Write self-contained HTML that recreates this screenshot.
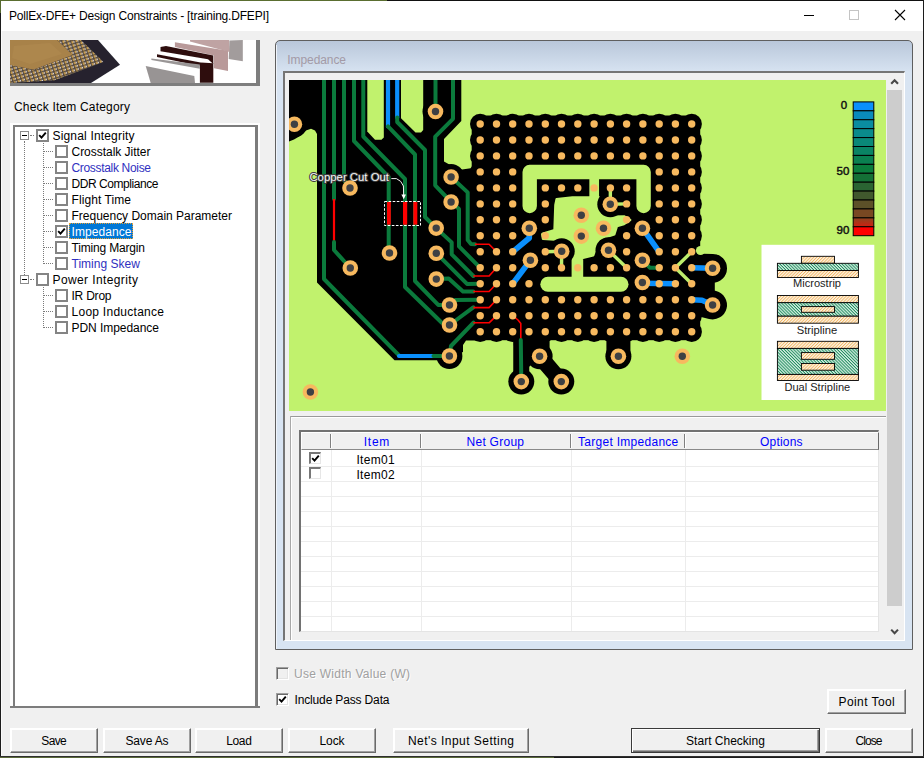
<!DOCTYPE html><html><head><meta charset="utf-8"><title>PollEx-DFE+ Design Constraints</title><style>
html,body{margin:0;padding:0}
body{width:924px;height:758px;position:relative;overflow:hidden;background:#f0f0f0;font-family:"Liberation Sans",sans-serif;font-size:12px;color:#000}
.a{position:absolute}
.t{position:absolute;white-space:nowrap;line-height:14px;height:14px}
.cb{position:absolute;width:9px;height:9px;border:2px solid #848484;background:#fff}
.ex{position:absolute;width:7px;height:7px;border:1px solid #8c8c8c;background:#fff}
.ex i{position:absolute;left:1px;top:3px;width:5px;height:1px;background:#000}
.dv{position:absolute;width:0;border-left:1px dotted #7a7a7a}
.dh{position:absolute;height:0;border-top:1px dotted #7a7a7a}
.btn{position:absolute;height:24.4px;box-sizing:border-box;background:#f0f0f0;border-top:1px solid #fff;border-left:1px solid #fff;border-right:1px solid #6a6a6a;border-bottom:1px solid #6a6a6a;box-shadow:inset -1px -1px 0 #a0a0a0, inset 1px 1px 0 #fff;text-align:center;line-height:24.6px;white-space:nowrap}
.cb3{position:absolute;width:11px;height:11px;background:#fff;border:1px solid;border-color:#a0a0a0 #fff #fff #a0a0a0;box-shadow:inset 1px 1px 0 #696969, inset -1px -1px 0 #e3e3e3}
.cb4{position:absolute;width:9px;height:9px;background:#fff;border:solid;border-width:2px 1px 1px 2px;border-color:#777 #e6e6e6 #e6e6e6 #777}
.hd{position:absolute;top:435px;height:14px;line-height:14px;color:#0000ff;text-align:center;white-space:nowrap}
.sep{position:absolute;top:434px;width:1px;height:14px;background:#808080;box-shadow:1px 0 0 #fff}
.gl{position:absolute;background:#ececec}
</style></head><body>
<div class="a" style="left:0;top:0;width:924px;height:1px;background:linear-gradient(90deg,#5a6e30 0,#5a6e30 387px,#111 387px)"></div>
<div class="a" style="left:0;top:0;width:1px;height:13px;background:#55692f"></div>
<div class="a" style="left:0;top:13px;width:1px;height:745px;background:#1c1c1c"></div>
<div class="a" style="left:923px;top:0;width:1px;height:758px;background:#1c1c1c"></div>
<div class="a" style="left:0;top:756px;width:924px;height:1px;background:#2e2e2e"></div>
<div class="a" style="left:0;top:757px;width:924px;height:1px;background:linear-gradient(90deg,#5b6b3a 0,#5b6b3a 60%,#1c1c1c 60%)"></div>
<div class="a" style="left:1px;top:1px;width:922px;height:30px;background:#fff"></div>
<div class="t" style="left:9px;top:9px;letter-spacing:-0.19px;">PollEx-DFE+ Design Constraints - [training.DFEPI]</div>
<div class="a" style="left:804px;top:15px;width:10px;height:1px;background:#000"></div>
<div class="a" style="left:849px;top:10px;width:8px;height:8px;border:1px solid #c4c4c4"></div>
<svg class="a" style="left:894px;top:9px" width="12" height="12" viewBox="0 0 12 12"><path d="M1 1 L11 11 M11 1 L1 11" stroke="#000" stroke-width="1.1" fill="none"/></svg>
<div class="a" style="left:1px;top:31px;width:1px;height:725px;background:#fbfbfb"></div>
<div class="a" style="left:10px;top:40px;width:249.5px;height:45.5px;background:#7e7e7e"></div>
<svg class="a" style="left:10px;top:40px" width="246" height="43" viewBox="10 40 246 43">
<defs><pattern id="pins" width="4.2" height="3.4" patternUnits="userSpaceOnUse" patternTransform="rotate(-18)"><rect width="4.2" height="3.4" fill="#54493f"/><rect x="0.4" y="0.2" width="1.7" height="2.4" fill="#d9a94e"/><rect x="2.2" y="0.6" width="1.1" height="1.6" fill="#e9e4ec"/></pattern>
<filter id="bl"><feGaussianBlur stdDeviation="0.6"/></filter></defs>
<rect x="10" y="40" width="246" height="43" fill="#fff"/>
<g filter="url(#bl)">
<polygon points="10,40 98,40 120,64.7 91,83 10,83" fill="#25242f"/>
<polygon points="57,40 81,40 103.5,62 54.5,80.2 10,83 10,64 33,70 72.7,55" fill="url(#pins)"/>
<polygon points="10,40 57.2,40 72.7,54.9 33.3,69.7 10,64.7" fill="#a8824a"/>
<polygon points="14,46 50,43 62,54 30,64 12,58" fill="#b08a50" opacity="0.6"/>
</g>
<g filter="url(#bl)">
<polygon points="229.4,40.6 242.8,40 242.8,61.2 228.7,59.1" fill="#a29c9c"/>
<polygon points="190,40 229,40 229.5,52 190,41.5" fill="#bfa3a3"/>
<polygon points="174.9,42.2 228,50.7 228,71 214,68.2 214,55.6 174.9,47.1" fill="#b99a9a"/>
<polygon points="160.5,47 166,46 213.3,55.6 213.3,64 208,59.2 160.5,51.3" fill="#2e1010"/>
<polygon points="157,54.2 200.6,62.6 213.3,63.3 213.3,82.7 199.9,82.7 199.9,66 157,57" fill="#2e1010"/>
<polygon points="151.4,58.4 199.9,64.4 199.9,68.8 151.4,60" fill="#9a9696"/>
<polygon points="145.7,66.1 194.3,76 195,83 150.7,83" fill="#989494"/>
</g>
</svg>
<div class="t" style="left:14px;top:100px;letter-spacing:0.182px;">Check Item Category</div>
<div class="a" style="left:10.3px;top:122.6px;width:249.7px;height:585.6px;background:#fdfdfd"></div>
<div class="a" style="left:12.5px;top:124.8px;width:245.3px;height:583.4px;background:#7c7c7c"></div>
<div class="a" style="left:10.3px;top:706px;width:249.7px;height:2.3px;background:#7c7c7c"></div>
<div class="a" style="left:14.9px;top:126.8px;width:240.5px;height:579.2px;background:#fff"></div>
<div class="dv" style="left:24px;top:141px;height:138px"></div>
<div class="dv" style="left:43px;top:143px;height:121px"></div>
<div class="dv" style="left:43px;top:287px;height:41px"></div>
<div class="ex" style="left:20px;top:131px"><i></i></div>
<div class="dh" style="left:30px;top:135px;width:4px"></div>
<div class="cb" style="left:36px;top:129px"></div>
<svg class="a" style="left:38px;top:131px" width="9" height="9" viewBox="0 0 9 9"><path d="M1.2 4.2 L3.5 6.6 L7.8 1.6" fill="none" stroke="#000" stroke-width="1.9"/></svg>
<div class="t" style="left:52.5px;top:128.5px;letter-spacing:0.174px;">Signal Integrity</div>
<div class="dh" style="left:44px;top:151px;width:9px"></div>
<div class="cb" style="left:55px;top:145px"></div>
<div class="t" style="left:71.5px;top:144.5px;letter-spacing:-0.024px;">Crosstalk Jitter</div>
<div class="dh" style="left:44px;top:167px;width:9px"></div>
<div class="cb" style="left:55px;top:161px"></div>
<div class="t" style="left:71.5px;top:160.5px;color:#3030c0;letter-spacing:-0.324px;">Crosstalk Noise</div>
<div class="dh" style="left:44px;top:183px;width:9px"></div>
<div class="cb" style="left:55px;top:177px"></div>
<div class="t" style="left:71.5px;top:176.5px;letter-spacing:-0.439px;">DDR Compliance</div>
<div class="dh" style="left:44px;top:199px;width:9px"></div>
<div class="cb" style="left:55px;top:193px"></div>
<div class="t" style="left:71.5px;top:192.5px;letter-spacing:0.081px;">Flight Time</div>
<div class="dh" style="left:44px;top:215px;width:9px"></div>
<div class="cb" style="left:55px;top:209px"></div>
<div class="t" style="left:71.5px;top:208.5px;letter-spacing:-0.009px;">Frequency Domain Parameter</div>
<div class="dh" style="left:44px;top:231px;width:9px"></div>
<div class="cb" style="left:55px;top:225px"></div>
<svg class="a" style="left:57px;top:227px" width="9" height="9" viewBox="0 0 9 9"><path d="M1.2 4.2 L3.5 6.6 L7.8 1.6" fill="none" stroke="#000" stroke-width="1.9"/></svg>
<div class="a" style="left:69px;top:223px;width:64px;height:16px;background:#0078d7;box-sizing:border-box;border:1px dotted #e8a030"></div>
<div class="t" style="left:71.5px;top:224.5px;color:#fff;letter-spacing:0.078px;">Impedance</div>
<div class="dh" style="left:44px;top:247px;width:9px"></div>
<div class="cb" style="left:55px;top:241px"></div>
<div class="t" style="left:71.5px;top:240.5px;letter-spacing:-0.173px;">Timing Margin</div>
<div class="dh" style="left:44px;top:263px;width:9px"></div>
<div class="cb" style="left:55px;top:257px"></div>
<div class="t" style="left:71.5px;top:256.5px;color:#3030c0;letter-spacing:0.025px;">Timing Skew</div>
<div class="ex" style="left:20px;top:275px"><i></i></div>
<div class="dh" style="left:30px;top:279px;width:4px"></div>
<div class="cb" style="left:36px;top:273px"></div>
<div class="t" style="left:52.5px;top:272.5px;letter-spacing:0.390px;">Power Integrity</div>
<div class="dh" style="left:44px;top:295px;width:9px"></div>
<div class="cb" style="left:55px;top:289px"></div>
<div class="t" style="left:71.5px;top:288.5px;letter-spacing:-0.224px;">IR Drop</div>
<div class="dh" style="left:44px;top:311px;width:9px"></div>
<div class="cb" style="left:55px;top:305px"></div>
<div class="t" style="left:71.5px;top:304.5px;letter-spacing:0.268px;">Loop Inductance</div>
<div class="dh" style="left:44px;top:327px;width:9px"></div>
<div class="cb" style="left:55px;top:321px"></div>
<div class="t" style="left:71.5px;top:320.5px;letter-spacing:-0.046px;">PDN Impedance</div>
<div class="btn" style="left:10px;top:728.3px;width:88px;"><span style="letter-spacing:-0.620px;margin-right:0.620px">Save</span></div>
<div class="btn" style="left:103px;top:728.3px;width:88px;"><span style="letter-spacing:-0.139px;margin-right:0.139px">Save As</span></div>
<div class="btn" style="left:195px;top:728.3px;width:88px;"><span style="letter-spacing:-0.334px;margin-right:0.334px">Load</span></div>
<div class="btn" style="left:288px;top:728.3px;width:88px;"><span style="letter-spacing:-0.053px;margin-right:0.053px">Lock</span></div>
<div class="btn" style="left:393px;top:728.3px;width:136px;"><span style="letter-spacing:0.462px;margin-right:-0.462px">Net's Input Setting</span></div>
<div class="btn" style="left:631px;top:728.3px;width:189px;border:1px solid #3a3a3a;box-shadow:inset 1px 1px 0 #fff, inset -1px -1px 0 #6a6a6a, inset -2px -2px 0 #a0a0a0;"><span style="letter-spacing:0.007px;margin-right:-0.007px">Start Checking</span></div>
<div class="btn" style="left:825px;top:728.3px;width:88px;"><span style="letter-spacing:-0.922px;margin-right:0.922px">Close</span></div>
<div class="btn" style="left:827px;top:689.3px;width:79.3px;"><span style="letter-spacing:0.424px;margin-right:-0.424px">Point Tool</span></div>
<div class="cb3" style="left:276px;top:667px;background:#f0f0f0"></div>
<div class="t" style="left:294px;top:666.5px;color:#a0a0a0;letter-spacing:0.270px;text-shadow:1px 1px 0 #fff;">Use Width Value (W)</div>
<div class="cb3" style="left:276px;top:693px"></div>
<svg class="a" style="left:278px;top:695px" width="9" height="9" viewBox="0 0 9 9"><path d="M1.2 4.2 L3.5 6.6 L7.8 1.6" fill="none" stroke="#000" stroke-width="1.9"/></svg>
<div class="t" style="left:294.5px;top:692.5px;letter-spacing:-0.149px;">Include Pass Data</div>
<div class="a" style="left:275px;top:40px;width:638px;height:610px;box-sizing:border-box;border:1px solid #5f5f5f;border-radius:5px 5px 0 0;background:linear-gradient(#b9c7da 0px,#d8e4f2 32px,#d8e4f2 100%)"></div>
<div class="a" style="left:276px;top:45px;width:1px;height:604px;background:#eef3fa"></div>
<div class="t" style="left:287.3px;top:52.8px;color:#a39aa6;letter-spacing:-0.084px;">Impedance</div>
<div class="a" style="left:283px;top:71px;width:622px;height:570px;background:#f0f0f0;box-sizing:border-box;border-top:2px solid #757575;border-left:2px solid #757575;border-right:1px solid #fff;border-bottom:1px solid #fff"></div>
<div class="a" style="left:887px;top:73px;width:16px;height:567px;background:#f0f0f0"></div>
<div class="a" style="left:887px;top:90px;width:15px;height:516px;background:#cdcdcd"></div>
<svg class="a" style="left:890px;top:78.3px" width="10" height="8" viewBox="0 0 10 8"><path d="M1.2 5.8 L4.6 2.2 L8 5.8" fill="none" stroke="#484848" stroke-width="2.1"/></svg>
<svg class="a" style="left:890px;top:628.3px" width="10" height="8" viewBox="0 0 10 8"><path d="M1.2 1.6 L4.6 5.2 L8 1.6" fill="none" stroke="#484848" stroke-width="2.1"/></svg>
<svg style="position:absolute;left:289px;top:80px" width="597" height="331" viewBox="289 80 597 331">
<rect x="289" y="80" width="597" height="331" fill="#c1f26d"/>
<polygon points="289.0,80.0 461.3,80.0 461.3,121.0 444.0,139.0 444.0,161.5 452.0,166.0 462.0,169.5 476.0,167.5 476.0,340.5 466.0,340.5 463.0,345.0 463.0,352.0 445.0,360.3 394.5,360.3 317.0,282.5 317.0,134.0 315.0,130.5 311.0,128.8 306.0,130.5 300.0,136.0 294.0,139.5 289.0,141.5" fill="#000"/>
<polygon points="367.3,80.0 383.8,80.0 383.8,137.5 381.5,139.8 375.0,139.8 367.3,131.5" fill="#c1f26d"/>
<polygon points="401.0,80.0 423.2,80.0 423.2,130.0 421.0,132.6 415.5,132.6 401.0,118.3" fill="#c1f26d"/>
<circle cx="675.4" cy="187.9" r="10.2" fill="#000"/>
<line x1="675.4" y1="187.9" x2="691.7" y2="187.9" stroke="#000" stroke-width="17"/>
<line x1="675.4" y1="187.9" x2="675.4" y2="203.9" stroke="#000" stroke-width="17"/>
<circle cx="545.3" cy="124.0" r="10.2" fill="#000"/>
<line x1="545.3" y1="124.0" x2="561.5" y2="124.0" stroke="#000" stroke-width="17"/>
<line x1="545.3" y1="124.0" x2="545.3" y2="140.0" stroke="#000" stroke-width="17"/>
<circle cx="545.3" cy="267.8" r="10.2" fill="#000"/>
<line x1="545.3" y1="267.8" x2="561.5" y2="267.8" stroke="#000" stroke-width="17"/>
<circle cx="561.5" cy="140.0" r="10.2" fill="#000"/>
<line x1="561.5" y1="140.0" x2="577.8" y2="140.0" stroke="#000" stroke-width="17"/>
<line x1="561.5" y1="140.0" x2="561.5" y2="155.9" stroke="#000" stroke-width="17"/>
<circle cx="610.4" cy="124.0" r="10.2" fill="#000"/>
<line x1="610.4" y1="124.0" x2="626.6" y2="124.0" stroke="#000" stroke-width="17"/>
<line x1="610.4" y1="124.0" x2="610.4" y2="140.0" stroke="#000" stroke-width="17"/>
<circle cx="529.0" cy="331.7" r="10.2" fill="#000"/>
<line x1="529.0" y1="331.7" x2="545.3" y2="331.7" stroke="#000" stroke-width="17"/>
<circle cx="610.4" cy="267.8" r="10.2" fill="#000"/>
<line x1="610.4" y1="267.8" x2="626.6" y2="267.8" stroke="#000" stroke-width="17"/>
<circle cx="626.6" cy="251.8" r="10.2" fill="#000"/>
<line x1="626.6" y1="251.8" x2="626.6" y2="267.8" stroke="#000" stroke-width="17"/>
<circle cx="480.2" cy="203.9" r="10.2" fill="#000"/>
<line x1="480.2" y1="203.9" x2="496.5" y2="203.9" stroke="#000" stroke-width="17"/>
<line x1="480.2" y1="203.9" x2="480.2" y2="219.8" stroke="#000" stroke-width="17"/>
<circle cx="512.7" cy="155.9" r="10.2" fill="#000"/>
<line x1="512.7" y1="155.9" x2="529.0" y2="155.9" stroke="#000" stroke-width="17"/>
<line x1="512.7" y1="155.9" x2="512.7" y2="171.9" stroke="#000" stroke-width="17"/>
<circle cx="659.2" cy="203.9" r="10.2" fill="#000"/>
<line x1="659.2" y1="203.9" x2="675.4" y2="203.9" stroke="#000" stroke-width="17"/>
<line x1="659.2" y1="203.9" x2="659.2" y2="219.8" stroke="#000" stroke-width="17"/>
<circle cx="512.7" cy="299.7" r="10.2" fill="#000"/>
<line x1="512.7" y1="299.7" x2="529.0" y2="299.7" stroke="#000" stroke-width="17"/>
<line x1="512.7" y1="299.7" x2="512.7" y2="315.7" stroke="#000" stroke-width="17"/>
<circle cx="691.7" cy="251.8" r="10.2" fill="#000"/>
<line x1="691.7" y1="251.8" x2="691.7" y2="267.8" stroke="#000" stroke-width="17"/>
<circle cx="577.8" cy="155.9" r="10.2" fill="#000"/>
<line x1="577.8" y1="155.9" x2="594.1" y2="155.9" stroke="#000" stroke-width="17"/>
<circle cx="594.1" cy="140.0" r="10.2" fill="#000"/>
<line x1="594.1" y1="140.0" x2="610.4" y2="140.0" stroke="#000" stroke-width="17"/>
<line x1="594.1" y1="140.0" x2="594.1" y2="155.9" stroke="#000" stroke-width="17"/>
<circle cx="577.8" cy="299.7" r="10.2" fill="#000"/>
<line x1="577.8" y1="299.7" x2="594.1" y2="299.7" stroke="#000" stroke-width="17"/>
<line x1="577.8" y1="299.7" x2="577.8" y2="315.7" stroke="#000" stroke-width="17"/>
<circle cx="545.3" cy="155.9" r="10.2" fill="#000"/>
<line x1="545.3" y1="155.9" x2="561.5" y2="155.9" stroke="#000" stroke-width="17"/>
<circle cx="610.4" cy="155.9" r="10.2" fill="#000"/>
<line x1="610.4" y1="155.9" x2="626.6" y2="155.9" stroke="#000" stroke-width="17"/>
<circle cx="626.6" cy="140.0" r="10.2" fill="#000"/>
<line x1="626.6" y1="140.0" x2="642.9" y2="140.0" stroke="#000" stroke-width="17"/>
<line x1="626.6" y1="140.0" x2="626.6" y2="155.9" stroke="#000" stroke-width="17"/>
<circle cx="561.5" cy="315.7" r="10.2" fill="#000"/>
<line x1="561.5" y1="315.7" x2="577.8" y2="315.7" stroke="#000" stroke-width="17"/>
<line x1="561.5" y1="315.7" x2="561.5" y2="331.7" stroke="#000" stroke-width="17"/>
<circle cx="610.4" cy="299.7" r="10.2" fill="#000"/>
<line x1="610.4" y1="299.7" x2="626.6" y2="299.7" stroke="#000" stroke-width="17"/>
<line x1="610.4" y1="299.7" x2="610.4" y2="315.7" stroke="#000" stroke-width="17"/>
<circle cx="480.2" cy="235.8" r="10.2" fill="#000"/>
<line x1="480.2" y1="235.8" x2="496.5" y2="235.8" stroke="#000" stroke-width="17"/>
<line x1="480.2" y1="235.8" x2="480.2" y2="251.8" stroke="#000" stroke-width="17"/>
<circle cx="512.7" cy="187.9" r="10.2" fill="#000"/>
<line x1="512.7" y1="187.9" x2="512.7" y2="203.9" stroke="#000" stroke-width="17"/>
<circle cx="659.2" cy="235.8" r="10.2" fill="#000"/>
<line x1="659.2" y1="235.8" x2="675.4" y2="235.8" stroke="#000" stroke-width="17"/>
<line x1="659.2" y1="235.8" x2="659.2" y2="251.8" stroke="#000" stroke-width="17"/>
<circle cx="691.7" cy="140.0" r="10.2" fill="#000"/>
<line x1="691.7" y1="140.0" x2="691.7" y2="155.9" stroke="#000" stroke-width="17"/>
<circle cx="496.5" cy="251.8" r="10.2" fill="#000"/>
<line x1="496.5" y1="251.8" x2="512.7" y2="251.8" stroke="#000" stroke-width="17"/>
<line x1="496.5" y1="251.8" x2="496.5" y2="267.8" stroke="#000" stroke-width="17"/>
<circle cx="691.7" cy="283.8" r="10.2" fill="#000"/>
<line x1="691.7" y1="283.8" x2="691.7" y2="299.7" stroke="#000" stroke-width="17"/>
<circle cx="577.8" cy="187.9" r="10.2" fill="#000"/>
<circle cx="577.8" cy="331.7" r="10.2" fill="#000"/>
<line x1="577.8" y1="331.7" x2="594.1" y2="331.7" stroke="#000" stroke-width="17"/>
<circle cx="594.1" cy="315.7" r="10.2" fill="#000"/>
<line x1="594.1" y1="315.7" x2="610.4" y2="315.7" stroke="#000" stroke-width="17"/>
<line x1="594.1" y1="315.7" x2="594.1" y2="331.7" stroke="#000" stroke-width="17"/>
<circle cx="610.4" cy="187.9" r="10.2" fill="#000"/>
<line x1="610.4" y1="187.9" x2="626.6" y2="187.9" stroke="#000" stroke-width="17"/>
<circle cx="480.2" cy="124.0" r="10.2" fill="#000"/>
<line x1="480.2" y1="124.0" x2="496.5" y2="124.0" stroke="#000" stroke-width="17"/>
<line x1="480.2" y1="124.0" x2="480.2" y2="140.0" stroke="#000" stroke-width="17"/>
<circle cx="659.2" cy="124.0" r="10.2" fill="#000"/>
<line x1="659.2" y1="124.0" x2="675.4" y2="124.0" stroke="#000" stroke-width="17"/>
<line x1="659.2" y1="124.0" x2="659.2" y2="140.0" stroke="#000" stroke-width="17"/>
<circle cx="626.6" cy="315.7" r="10.2" fill="#000"/>
<line x1="626.6" y1="315.7" x2="642.9" y2="315.7" stroke="#000" stroke-width="17"/>
<line x1="626.6" y1="315.7" x2="626.6" y2="331.7" stroke="#000" stroke-width="17"/>
<circle cx="480.2" cy="267.8" r="10.2" fill="#000"/>
<line x1="480.2" y1="267.8" x2="496.5" y2="267.8" stroke="#000" stroke-width="17"/>
<line x1="480.2" y1="267.8" x2="480.2" y2="283.8" stroke="#000" stroke-width="17"/>
<circle cx="659.2" cy="267.8" r="10.2" fill="#000"/>
<line x1="659.2" y1="267.8" x2="675.4" y2="267.8" stroke="#000" stroke-width="17"/>
<line x1="659.2" y1="267.8" x2="659.2" y2="283.8" stroke="#000" stroke-width="17"/>
<circle cx="691.7" cy="171.9" r="10.2" fill="#000"/>
<line x1="691.7" y1="171.9" x2="691.7" y2="187.9" stroke="#000" stroke-width="17"/>
<circle cx="691.7" cy="315.7" r="10.2" fill="#000"/>
<line x1="691.7" y1="315.7" x2="691.7" y2="331.7" stroke="#000" stroke-width="17"/>
<circle cx="496.5" cy="283.8" r="10.2" fill="#000"/>
<line x1="496.5" y1="283.8" x2="512.7" y2="283.8" stroke="#000" stroke-width="17"/>
<line x1="496.5" y1="283.8" x2="496.5" y2="299.7" stroke="#000" stroke-width="17"/>
<circle cx="529.0" cy="140.0" r="10.2" fill="#000"/>
<line x1="529.0" y1="140.0" x2="545.3" y2="140.0" stroke="#000" stroke-width="17"/>
<line x1="529.0" y1="140.0" x2="529.0" y2="155.9" stroke="#000" stroke-width="17"/>
<circle cx="675.4" cy="331.7" r="10.2" fill="#000"/>
<line x1="675.4" y1="331.7" x2="691.7" y2="331.7" stroke="#000" stroke-width="17"/>
<circle cx="529.0" cy="283.8" r="10.2" fill="#000"/>
<line x1="529.0" y1="283.8" x2="529.0" y2="299.7" stroke="#000" stroke-width="17"/>
<circle cx="626.6" cy="203.9" r="10.2" fill="#000"/>
<circle cx="480.2" cy="155.9" r="10.2" fill="#000"/>
<line x1="480.2" y1="155.9" x2="496.5" y2="155.9" stroke="#000" stroke-width="17"/>
<line x1="480.2" y1="155.9" x2="480.2" y2="171.9" stroke="#000" stroke-width="17"/>
<circle cx="659.2" cy="155.9" r="10.2" fill="#000"/>
<line x1="659.2" y1="155.9" x2="675.4" y2="155.9" stroke="#000" stroke-width="17"/>
<line x1="659.2" y1="155.9" x2="659.2" y2="171.9" stroke="#000" stroke-width="17"/>
<circle cx="496.5" cy="171.9" r="10.2" fill="#000"/>
<line x1="496.5" y1="171.9" x2="512.7" y2="171.9" stroke="#000" stroke-width="17"/>
<line x1="496.5" y1="171.9" x2="496.5" y2="187.9" stroke="#000" stroke-width="17"/>
<circle cx="691.7" cy="203.9" r="10.2" fill="#000"/>
<line x1="691.7" y1="203.9" x2="691.7" y2="219.8" stroke="#000" stroke-width="17"/>
<circle cx="496.5" cy="315.7" r="10.2" fill="#000"/>
<line x1="496.5" y1="315.7" x2="512.7" y2="315.7" stroke="#000" stroke-width="17"/>
<line x1="496.5" y1="315.7" x2="496.5" y2="331.7" stroke="#000" stroke-width="17"/>
<circle cx="675.4" cy="219.8" r="10.2" fill="#000"/>
<line x1="675.4" y1="219.8" x2="691.7" y2="219.8" stroke="#000" stroke-width="17"/>
<line x1="675.4" y1="219.8" x2="675.4" y2="235.8" stroke="#000" stroke-width="17"/>
<circle cx="561.5" cy="124.0" r="10.2" fill="#000"/>
<line x1="561.5" y1="124.0" x2="577.8" y2="124.0" stroke="#000" stroke-width="17"/>
<line x1="561.5" y1="124.0" x2="561.5" y2="140.0" stroke="#000" stroke-width="17"/>
<circle cx="529.0" cy="315.7" r="10.2" fill="#000"/>
<line x1="529.0" y1="315.7" x2="545.3" y2="315.7" stroke="#000" stroke-width="17"/>
<line x1="529.0" y1="315.7" x2="529.0" y2="331.7" stroke="#000" stroke-width="17"/>
<circle cx="561.5" cy="267.8" r="10.2" fill="#000"/>
<circle cx="545.3" cy="299.7" r="10.2" fill="#000"/>
<line x1="545.3" y1="299.7" x2="561.5" y2="299.7" stroke="#000" stroke-width="17"/>
<line x1="545.3" y1="299.7" x2="545.3" y2="315.7" stroke="#000" stroke-width="17"/>
<circle cx="626.6" cy="235.8" r="10.2" fill="#000"/>
<line x1="626.6" y1="235.8" x2="626.6" y2="251.8" stroke="#000" stroke-width="17"/>
<circle cx="659.2" cy="187.9" r="10.2" fill="#000"/>
<line x1="659.2" y1="187.9" x2="675.4" y2="187.9" stroke="#000" stroke-width="17"/>
<line x1="659.2" y1="187.9" x2="659.2" y2="203.9" stroke="#000" stroke-width="17"/>
<circle cx="496.5" cy="203.9" r="10.2" fill="#000"/>
<line x1="496.5" y1="203.9" x2="512.7" y2="203.9" stroke="#000" stroke-width="17"/>
<line x1="496.5" y1="203.9" x2="496.5" y2="219.8" stroke="#000" stroke-width="17"/>
<circle cx="691.7" cy="235.8" r="10.2" fill="#000"/>
<line x1="691.7" y1="235.8" x2="691.7" y2="251.8" stroke="#000" stroke-width="17"/>
<circle cx="577.8" cy="140.0" r="10.2" fill="#000"/>
<line x1="577.8" y1="140.0" x2="594.1" y2="140.0" stroke="#000" stroke-width="17"/>
<line x1="577.8" y1="140.0" x2="577.8" y2="155.9" stroke="#000" stroke-width="17"/>
<circle cx="594.1" cy="124.0" r="10.2" fill="#000"/>
<line x1="594.1" y1="124.0" x2="610.4" y2="124.0" stroke="#000" stroke-width="17"/>
<line x1="594.1" y1="124.0" x2="594.1" y2="140.0" stroke="#000" stroke-width="17"/>
<circle cx="512.7" cy="331.7" r="10.2" fill="#000"/>
<line x1="512.7" y1="331.7" x2="529.0" y2="331.7" stroke="#000" stroke-width="17"/>
<circle cx="594.1" cy="267.8" r="10.2" fill="#000"/>
<line x1="594.1" y1="267.8" x2="610.4" y2="267.8" stroke="#000" stroke-width="17"/>
<circle cx="675.4" cy="251.8" r="10.2" fill="#000"/>
<line x1="675.4" y1="251.8" x2="691.7" y2="251.8" stroke="#000" stroke-width="17"/>
<line x1="675.4" y1="251.8" x2="675.4" y2="267.8" stroke="#000" stroke-width="17"/>
<circle cx="561.5" cy="155.9" r="10.2" fill="#000"/>
<line x1="561.5" y1="155.9" x2="577.8" y2="155.9" stroke="#000" stroke-width="17"/>
<circle cx="545.3" cy="187.9" r="10.2" fill="#000"/>
<line x1="545.3" y1="187.9" x2="561.5" y2="187.9" stroke="#000" stroke-width="17"/>
<line x1="545.3" y1="187.9" x2="545.3" y2="203.9" stroke="#000" stroke-width="17"/>
<circle cx="626.6" cy="124.0" r="10.2" fill="#000"/>
<line x1="626.6" y1="124.0" x2="642.9" y2="124.0" stroke="#000" stroke-width="17"/>
<line x1="626.6" y1="124.0" x2="626.6" y2="140.0" stroke="#000" stroke-width="17"/>
<circle cx="561.5" cy="299.7" r="10.2" fill="#000"/>
<line x1="561.5" y1="299.7" x2="577.8" y2="299.7" stroke="#000" stroke-width="17"/>
<line x1="561.5" y1="299.7" x2="561.5" y2="315.7" stroke="#000" stroke-width="17"/>
<circle cx="545.3" cy="331.7" r="10.2" fill="#000"/>
<line x1="545.3" y1="331.7" x2="561.5" y2="331.7" stroke="#000" stroke-width="17"/>
<circle cx="626.6" cy="267.8" r="10.2" fill="#000"/>
<circle cx="642.9" cy="140.0" r="10.2" fill="#000"/>
<line x1="642.9" y1="140.0" x2="659.2" y2="140.0" stroke="#000" stroke-width="17"/>
<line x1="642.9" y1="140.0" x2="642.9" y2="155.9" stroke="#000" stroke-width="17"/>
<circle cx="691.7" cy="124.0" r="10.2" fill="#000"/>
<line x1="691.7" y1="124.0" x2="691.7" y2="140.0" stroke="#000" stroke-width="17"/>
<circle cx="610.4" cy="331.7" r="10.2" fill="#000"/>
<line x1="610.4" y1="331.7" x2="626.6" y2="331.7" stroke="#000" stroke-width="17"/>
<circle cx="496.5" cy="235.8" r="10.2" fill="#000"/>
<line x1="496.5" y1="235.8" x2="512.7" y2="235.8" stroke="#000" stroke-width="17"/>
<line x1="496.5" y1="235.8" x2="496.5" y2="251.8" stroke="#000" stroke-width="17"/>
<circle cx="691.7" cy="267.8" r="10.2" fill="#000"/>
<line x1="691.7" y1="267.8" x2="691.7" y2="283.8" stroke="#000" stroke-width="17"/>
<circle cx="512.7" cy="219.8" r="10.2" fill="#000"/>
<line x1="512.7" y1="219.8" x2="512.7" y2="235.8" stroke="#000" stroke-width="17"/>
<circle cx="594.1" cy="155.9" r="10.2" fill="#000"/>
<line x1="594.1" y1="155.9" x2="610.4" y2="155.9" stroke="#000" stroke-width="17"/>
<circle cx="594.1" cy="299.7" r="10.2" fill="#000"/>
<line x1="594.1" y1="299.7" x2="610.4" y2="299.7" stroke="#000" stroke-width="17"/>
<line x1="594.1" y1="299.7" x2="594.1" y2="315.7" stroke="#000" stroke-width="17"/>
<circle cx="675.4" cy="140.0" r="10.2" fill="#000"/>
<line x1="675.4" y1="140.0" x2="691.7" y2="140.0" stroke="#000" stroke-width="17"/>
<line x1="675.4" y1="140.0" x2="675.4" y2="155.9" stroke="#000" stroke-width="17"/>
<circle cx="675.4" cy="283.8" r="10.2" fill="#000"/>
<line x1="675.4" y1="283.8" x2="691.7" y2="283.8" stroke="#000" stroke-width="17"/>
<line x1="675.4" y1="283.8" x2="675.4" y2="299.7" stroke="#000" stroke-width="17"/>
<circle cx="561.5" cy="187.9" r="10.2" fill="#000"/>
<line x1="561.5" y1="187.9" x2="577.8" y2="187.9" stroke="#000" stroke-width="17"/>
<circle cx="545.3" cy="219.8" r="10.2" fill="#000"/>
<circle cx="626.6" cy="155.9" r="10.2" fill="#000"/>
<line x1="626.6" y1="155.9" x2="642.9" y2="155.9" stroke="#000" stroke-width="17"/>
<circle cx="561.5" cy="331.7" r="10.2" fill="#000"/>
<line x1="561.5" y1="331.7" x2="577.8" y2="331.7" stroke="#000" stroke-width="17"/>
<circle cx="496.5" cy="124.0" r="10.2" fill="#000"/>
<line x1="496.5" y1="124.0" x2="512.7" y2="124.0" stroke="#000" stroke-width="17"/>
<line x1="496.5" y1="124.0" x2="496.5" y2="140.0" stroke="#000" stroke-width="17"/>
<circle cx="691.7" cy="155.9" r="10.2" fill="#000"/>
<line x1="691.7" y1="155.9" x2="691.7" y2="171.9" stroke="#000" stroke-width="17"/>
<circle cx="642.9" cy="315.7" r="10.2" fill="#000"/>
<line x1="642.9" y1="315.7" x2="659.2" y2="315.7" stroke="#000" stroke-width="17"/>
<line x1="642.9" y1="315.7" x2="642.9" y2="331.7" stroke="#000" stroke-width="17"/>
<circle cx="691.7" cy="299.7" r="10.2" fill="#000"/>
<line x1="691.7" y1="299.7" x2="691.7" y2="315.7" stroke="#000" stroke-width="17"/>
<circle cx="480.2" cy="299.7" r="10.2" fill="#000"/>
<line x1="480.2" y1="299.7" x2="496.5" y2="299.7" stroke="#000" stroke-width="17"/>
<line x1="480.2" y1="299.7" x2="480.2" y2="315.7" stroke="#000" stroke-width="17"/>
<circle cx="659.2" cy="299.7" r="10.2" fill="#000"/>
<line x1="659.2" y1="299.7" x2="675.4" y2="299.7" stroke="#000" stroke-width="17"/>
<line x1="659.2" y1="299.7" x2="659.2" y2="315.7" stroke="#000" stroke-width="17"/>
<circle cx="512.7" cy="251.8" r="10.2" fill="#000"/>
<line x1="512.7" y1="251.8" x2="512.7" y2="267.8" stroke="#000" stroke-width="17"/>
<circle cx="496.5" cy="267.8" r="10.2" fill="#000"/>
<line x1="496.5" y1="267.8" x2="512.7" y2="267.8" stroke="#000" stroke-width="17"/>
<line x1="496.5" y1="267.8" x2="496.5" y2="283.8" stroke="#000" stroke-width="17"/>
<circle cx="675.4" cy="171.9" r="10.2" fill="#000"/>
<line x1="675.4" y1="171.9" x2="691.7" y2="171.9" stroke="#000" stroke-width="17"/>
<line x1="675.4" y1="171.9" x2="675.4" y2="187.9" stroke="#000" stroke-width="17"/>
<circle cx="529.0" cy="124.0" r="10.2" fill="#000"/>
<line x1="529.0" y1="124.0" x2="545.3" y2="124.0" stroke="#000" stroke-width="17"/>
<line x1="529.0" y1="124.0" x2="529.0" y2="140.0" stroke="#000" stroke-width="17"/>
<circle cx="675.4" cy="315.7" r="10.2" fill="#000"/>
<line x1="675.4" y1="315.7" x2="691.7" y2="315.7" stroke="#000" stroke-width="17"/>
<line x1="675.4" y1="315.7" x2="675.4" y2="331.7" stroke="#000" stroke-width="17"/>
<circle cx="545.3" cy="251.8" r="10.2" fill="#000"/>
<line x1="545.3" y1="251.8" x2="545.3" y2="267.8" stroke="#000" stroke-width="17"/>
<circle cx="496.5" cy="155.9" r="10.2" fill="#000"/>
<line x1="496.5" y1="155.9" x2="512.7" y2="155.9" stroke="#000" stroke-width="17"/>
<line x1="496.5" y1="155.9" x2="496.5" y2="171.9" stroke="#000" stroke-width="17"/>
<circle cx="480.2" cy="187.9" r="10.2" fill="#000"/>
<line x1="480.2" y1="187.9" x2="496.5" y2="187.9" stroke="#000" stroke-width="17"/>
<line x1="480.2" y1="187.9" x2="480.2" y2="203.9" stroke="#000" stroke-width="17"/>
<circle cx="512.7" cy="140.0" r="10.2" fill="#000"/>
<line x1="512.7" y1="140.0" x2="529.0" y2="140.0" stroke="#000" stroke-width="17"/>
<line x1="512.7" y1="140.0" x2="512.7" y2="155.9" stroke="#000" stroke-width="17"/>
<circle cx="691.7" cy="187.9" r="10.2" fill="#000"/>
<line x1="691.7" y1="187.9" x2="691.7" y2="203.9" stroke="#000" stroke-width="17"/>
<circle cx="496.5" cy="299.7" r="10.2" fill="#000"/>
<line x1="496.5" y1="299.7" x2="512.7" y2="299.7" stroke="#000" stroke-width="17"/>
<line x1="496.5" y1="299.7" x2="496.5" y2="315.7" stroke="#000" stroke-width="17"/>
<circle cx="480.2" cy="331.7" r="10.2" fill="#000"/>
<line x1="480.2" y1="331.7" x2="496.5" y2="331.7" stroke="#000" stroke-width="17"/>
<circle cx="659.2" cy="331.7" r="10.2" fill="#000"/>
<line x1="659.2" y1="331.7" x2="675.4" y2="331.7" stroke="#000" stroke-width="17"/>
<circle cx="512.7" cy="283.8" r="10.2" fill="#000"/>
<line x1="512.7" y1="283.8" x2="529.0" y2="283.8" stroke="#000" stroke-width="17"/>
<line x1="512.7" y1="283.8" x2="512.7" y2="299.7" stroke="#000" stroke-width="17"/>
<circle cx="675.4" cy="203.9" r="10.2" fill="#000"/>
<line x1="675.4" y1="203.9" x2="691.7" y2="203.9" stroke="#000" stroke-width="17"/>
<line x1="675.4" y1="203.9" x2="675.4" y2="219.8" stroke="#000" stroke-width="17"/>
<circle cx="529.0" cy="155.9" r="10.2" fill="#000"/>
<line x1="529.0" y1="155.9" x2="545.3" y2="155.9" stroke="#000" stroke-width="17"/>
<circle cx="545.3" cy="140.0" r="10.2" fill="#000"/>
<line x1="545.3" y1="140.0" x2="561.5" y2="140.0" stroke="#000" stroke-width="17"/>
<line x1="545.3" y1="140.0" x2="545.3" y2="155.9" stroke="#000" stroke-width="17"/>
<circle cx="529.0" cy="299.7" r="10.2" fill="#000"/>
<line x1="529.0" y1="299.7" x2="545.3" y2="299.7" stroke="#000" stroke-width="17"/>
<line x1="529.0" y1="299.7" x2="529.0" y2="315.7" stroke="#000" stroke-width="17"/>
<circle cx="610.4" cy="140.0" r="10.2" fill="#000"/>
<line x1="610.4" y1="140.0" x2="626.6" y2="140.0" stroke="#000" stroke-width="17"/>
<line x1="610.4" y1="140.0" x2="610.4" y2="155.9" stroke="#000" stroke-width="17"/>
<circle cx="496.5" cy="187.9" r="10.2" fill="#000"/>
<line x1="496.5" y1="187.9" x2="512.7" y2="187.9" stroke="#000" stroke-width="17"/>
<line x1="496.5" y1="187.9" x2="496.5" y2="203.9" stroke="#000" stroke-width="17"/>
<circle cx="480.2" cy="219.8" r="10.2" fill="#000"/>
<line x1="480.2" y1="219.8" x2="496.5" y2="219.8" stroke="#000" stroke-width="17"/>
<line x1="480.2" y1="219.8" x2="480.2" y2="235.8" stroke="#000" stroke-width="17"/>
<circle cx="512.7" cy="171.9" r="10.2" fill="#000"/>
<line x1="512.7" y1="171.9" x2="512.7" y2="187.9" stroke="#000" stroke-width="17"/>
<circle cx="659.2" cy="219.8" r="10.2" fill="#000"/>
<line x1="659.2" y1="219.8" x2="675.4" y2="219.8" stroke="#000" stroke-width="17"/>
<line x1="659.2" y1="219.8" x2="659.2" y2="235.8" stroke="#000" stroke-width="17"/>
<circle cx="496.5" cy="331.7" r="10.2" fill="#000"/>
<line x1="496.5" y1="331.7" x2="512.7" y2="331.7" stroke="#000" stroke-width="17"/>
<circle cx="512.7" cy="315.7" r="10.2" fill="#000"/>
<line x1="512.7" y1="315.7" x2="529.0" y2="315.7" stroke="#000" stroke-width="17"/>
<line x1="512.7" y1="315.7" x2="512.7" y2="331.7" stroke="#000" stroke-width="17"/>
<circle cx="577.8" cy="315.7" r="10.2" fill="#000"/>
<line x1="577.8" y1="315.7" x2="594.1" y2="315.7" stroke="#000" stroke-width="17"/>
<line x1="577.8" y1="315.7" x2="577.8" y2="331.7" stroke="#000" stroke-width="17"/>
<circle cx="675.4" cy="235.8" r="10.2" fill="#000"/>
<line x1="675.4" y1="235.8" x2="691.7" y2="235.8" stroke="#000" stroke-width="17"/>
<line x1="675.4" y1="235.8" x2="675.4" y2="251.8" stroke="#000" stroke-width="17"/>
<circle cx="545.3" cy="315.7" r="10.2" fill="#000"/>
<line x1="545.3" y1="315.7" x2="561.5" y2="315.7" stroke="#000" stroke-width="17"/>
<line x1="545.3" y1="315.7" x2="545.3" y2="331.7" stroke="#000" stroke-width="17"/>
<circle cx="642.9" cy="124.0" r="10.2" fill="#000"/>
<line x1="642.9" y1="124.0" x2="659.2" y2="124.0" stroke="#000" stroke-width="17"/>
<line x1="642.9" y1="124.0" x2="642.9" y2="140.0" stroke="#000" stroke-width="17"/>
<circle cx="610.4" cy="315.7" r="10.2" fill="#000"/>
<line x1="610.4" y1="315.7" x2="626.6" y2="315.7" stroke="#000" stroke-width="17"/>
<line x1="610.4" y1="315.7" x2="610.4" y2="331.7" stroke="#000" stroke-width="17"/>
<circle cx="626.6" cy="299.7" r="10.2" fill="#000"/>
<line x1="626.6" y1="299.7" x2="642.9" y2="299.7" stroke="#000" stroke-width="17"/>
<line x1="626.6" y1="299.7" x2="626.6" y2="315.7" stroke="#000" stroke-width="17"/>
<circle cx="496.5" cy="219.8" r="10.2" fill="#000"/>
<line x1="496.5" y1="219.8" x2="512.7" y2="219.8" stroke="#000" stroke-width="17"/>
<line x1="496.5" y1="219.8" x2="496.5" y2="235.8" stroke="#000" stroke-width="17"/>
<circle cx="512.7" cy="203.9" r="10.2" fill="#000"/>
<line x1="512.7" y1="203.9" x2="512.7" y2="219.8" stroke="#000" stroke-width="17"/>
<circle cx="480.2" cy="251.8" r="10.2" fill="#000"/>
<line x1="480.2" y1="251.8" x2="496.5" y2="251.8" stroke="#000" stroke-width="17"/>
<line x1="480.2" y1="251.8" x2="480.2" y2="267.8" stroke="#000" stroke-width="17"/>
<circle cx="659.2" cy="251.8" r="10.2" fill="#000"/>
<line x1="659.2" y1="251.8" x2="675.4" y2="251.8" stroke="#000" stroke-width="17"/>
<line x1="659.2" y1="251.8" x2="659.2" y2="267.8" stroke="#000" stroke-width="17"/>
<circle cx="675.4" cy="124.0" r="10.2" fill="#000"/>
<line x1="675.4" y1="124.0" x2="691.7" y2="124.0" stroke="#000" stroke-width="17"/>
<line x1="675.4" y1="124.0" x2="675.4" y2="140.0" stroke="#000" stroke-width="17"/>
<circle cx="594.1" cy="331.7" r="10.2" fill="#000"/>
<line x1="594.1" y1="331.7" x2="610.4" y2="331.7" stroke="#000" stroke-width="17"/>
<circle cx="675.4" cy="267.8" r="10.2" fill="#000"/>
<line x1="675.4" y1="267.8" x2="691.7" y2="267.8" stroke="#000" stroke-width="17"/>
<line x1="675.4" y1="267.8" x2="675.4" y2="283.8" stroke="#000" stroke-width="17"/>
<circle cx="545.3" cy="203.9" r="10.2" fill="#000"/>
<line x1="545.3" y1="203.9" x2="545.3" y2="219.8" stroke="#000" stroke-width="17"/>
<circle cx="642.9" cy="155.9" r="10.2" fill="#000"/>
<line x1="642.9" y1="155.9" x2="659.2" y2="155.9" stroke="#000" stroke-width="17"/>
<circle cx="626.6" cy="187.9" r="10.2" fill="#000"/>
<line x1="626.6" y1="187.9" x2="626.6" y2="203.9" stroke="#000" stroke-width="17"/>
<circle cx="480.2" cy="140.0" r="10.2" fill="#000"/>
<line x1="480.2" y1="140.0" x2="496.5" y2="140.0" stroke="#000" stroke-width="17"/>
<line x1="480.2" y1="140.0" x2="480.2" y2="155.9" stroke="#000" stroke-width="17"/>
<circle cx="659.2" cy="140.0" r="10.2" fill="#000"/>
<line x1="659.2" y1="140.0" x2="675.4" y2="140.0" stroke="#000" stroke-width="17"/>
<line x1="659.2" y1="140.0" x2="659.2" y2="155.9" stroke="#000" stroke-width="17"/>
<circle cx="642.9" cy="299.7" r="10.2" fill="#000"/>
<line x1="642.9" y1="299.7" x2="659.2" y2="299.7" stroke="#000" stroke-width="17"/>
<line x1="642.9" y1="299.7" x2="642.9" y2="315.7" stroke="#000" stroke-width="17"/>
<circle cx="626.6" cy="331.7" r="10.2" fill="#000"/>
<line x1="626.6" y1="331.7" x2="642.9" y2="331.7" stroke="#000" stroke-width="17"/>
<circle cx="480.2" cy="283.8" r="10.2" fill="#000"/>
<line x1="480.2" y1="283.8" x2="496.5" y2="283.8" stroke="#000" stroke-width="17"/>
<line x1="480.2" y1="283.8" x2="480.2" y2="299.7" stroke="#000" stroke-width="17"/>
<circle cx="512.7" cy="235.8" r="10.2" fill="#000"/>
<line x1="512.7" y1="235.8" x2="512.7" y2="251.8" stroke="#000" stroke-width="17"/>
<circle cx="659.2" cy="283.8" r="10.2" fill="#000"/>
<line x1="659.2" y1="283.8" x2="675.4" y2="283.8" stroke="#000" stroke-width="17"/>
<line x1="659.2" y1="283.8" x2="659.2" y2="299.7" stroke="#000" stroke-width="17"/>
<circle cx="691.7" cy="331.7" r="10.2" fill="#000"/>
<circle cx="675.4" cy="155.9" r="10.2" fill="#000"/>
<line x1="675.4" y1="155.9" x2="691.7" y2="155.9" stroke="#000" stroke-width="17"/>
<line x1="675.4" y1="155.9" x2="675.4" y2="171.9" stroke="#000" stroke-width="17"/>
<circle cx="675.4" cy="299.7" r="10.2" fill="#000"/>
<line x1="675.4" y1="299.7" x2="691.7" y2="299.7" stroke="#000" stroke-width="17"/>
<line x1="675.4" y1="299.7" x2="675.4" y2="315.7" stroke="#000" stroke-width="17"/>
<circle cx="496.5" cy="140.0" r="10.2" fill="#000"/>
<line x1="496.5" y1="140.0" x2="512.7" y2="140.0" stroke="#000" stroke-width="17"/>
<line x1="496.5" y1="140.0" x2="496.5" y2="155.9" stroke="#000" stroke-width="17"/>
<circle cx="480.2" cy="171.9" r="10.2" fill="#000"/>
<line x1="480.2" y1="171.9" x2="496.5" y2="171.9" stroke="#000" stroke-width="17"/>
<line x1="480.2" y1="171.9" x2="480.2" y2="187.9" stroke="#000" stroke-width="17"/>
<circle cx="512.7" cy="124.0" r="10.2" fill="#000"/>
<line x1="512.7" y1="124.0" x2="529.0" y2="124.0" stroke="#000" stroke-width="17"/>
<line x1="512.7" y1="124.0" x2="512.7" y2="140.0" stroke="#000" stroke-width="17"/>
<circle cx="659.2" cy="171.9" r="10.2" fill="#000"/>
<line x1="659.2" y1="171.9" x2="675.4" y2="171.9" stroke="#000" stroke-width="17"/>
<line x1="659.2" y1="171.9" x2="659.2" y2="187.9" stroke="#000" stroke-width="17"/>
<circle cx="642.9" cy="331.7" r="10.2" fill="#000"/>
<line x1="642.9" y1="331.7" x2="659.2" y2="331.7" stroke="#000" stroke-width="17"/>
<circle cx="480.2" cy="315.7" r="10.2" fill="#000"/>
<line x1="480.2" y1="315.7" x2="496.5" y2="315.7" stroke="#000" stroke-width="17"/>
<line x1="480.2" y1="315.7" x2="480.2" y2="331.7" stroke="#000" stroke-width="17"/>
<circle cx="659.2" cy="315.7" r="10.2" fill="#000"/>
<line x1="659.2" y1="315.7" x2="675.4" y2="315.7" stroke="#000" stroke-width="17"/>
<line x1="659.2" y1="315.7" x2="659.2" y2="331.7" stroke="#000" stroke-width="17"/>
<circle cx="512.7" cy="267.8" r="10.2" fill="#000"/>
<line x1="512.7" y1="267.8" x2="512.7" y2="283.8" stroke="#000" stroke-width="17"/>
<circle cx="691.7" cy="219.8" r="10.2" fill="#000"/>
<line x1="691.7" y1="219.8" x2="691.7" y2="235.8" stroke="#000" stroke-width="17"/>
<circle cx="577.8" cy="124.0" r="10.2" fill="#000"/>
<line x1="577.8" y1="124.0" x2="594.1" y2="124.0" stroke="#000" stroke-width="17"/>
<line x1="577.8" y1="124.0" x2="577.8" y2="140.0" stroke="#000" stroke-width="17"/>
<rect x="520" y="163" width="133" height="131" fill="#000"/>
<polyline points="529.7,206.0 529.7,172.0 643.6,172.0 643.6,206.0" fill="none" stroke="#c1f26d" stroke-width="14.4" stroke-linecap="round" stroke-linejoin="round"/>
<polyline points="594.2,176.0 594.2,203.0" fill="none" stroke="#c1f26d" stroke-width="9.7" stroke-linecap="butt" stroke-linejoin="round"/>
<polygon points="556.6,199.3 572.4,197.5 589.5,197.5 599.0,197.5 599.1,211.7 606.2,216.6 624.0,216.4 630.2,220.0 624.0,224.0 617.0,226.0 614.3,234.3 599.1,239.4 593.2,255.4 582.0,258.0 582.0,277.0 572.8,277.0 572.8,243.7 570.0,239.8 554.5,239.6 543.0,238.8 542.2,234.0 554.5,230.2 555.4,205.0" fill="#c1f26d" stroke="#c1f26d" stroke-width="2.4" stroke-linejoin="round"/>
<polyline points="547.8,284.2 621.0,284.2" fill="none" stroke="#c1f26d" stroke-width="15" stroke-linecap="round" stroke-linejoin="round"/>
<circle cx="294.4" cy="124.2" r="13" fill="#000"/>
<circle cx="350.0" cy="188.0" r="13" fill="#000"/>
<circle cx="435.5" cy="111.5" r="13" fill="#000"/>
<circle cx="451.1" cy="177.0" r="13" fill="#000"/>
<circle cx="451.1" cy="202.0" r="13" fill="#000"/>
<circle cx="436.2" cy="228.1" r="13" fill="#000"/>
<circle cx="436.3" cy="253.2" r="13" fill="#000"/>
<circle cx="436.3" cy="279.1" r="13" fill="#000"/>
<circle cx="449.5" cy="305.0" r="13" fill="#000"/>
<circle cx="449.5" cy="325.0" r="13" fill="#000"/>
<circle cx="449.4" cy="356.0" r="13" fill="#000"/>
<circle cx="389.5" cy="253.0" r="13" fill="#000"/>
<circle cx="350.3" cy="268.0" r="13" fill="#000"/>
<circle cx="529.3" cy="228.2" r="13" fill="#000"/>
<circle cx="530.4" cy="260.2" r="13" fill="#000"/>
<circle cx="642.4" cy="228.2" r="13" fill="#000"/>
<circle cx="642.4" cy="260.3" r="13" fill="#000"/>
<circle cx="642.4" cy="282.5" r="13" fill="#000"/>
<circle cx="610.3" cy="204.2" r="13" fill="#000"/>
<circle cx="561.7" cy="251.2" r="13" fill="#000"/>
<circle cx="608.5" cy="250.3" r="13" fill="#000"/>
<circle cx="712.6" cy="268.3" r="13" fill="#000"/>
<circle cx="712.6" cy="305.0" r="13" fill="#000"/>
<circle cx="539.6" cy="356.3" r="13" fill="#000"/>
<circle cx="521.3" cy="381.6" r="13" fill="#000"/>
<circle cx="561.3" cy="381.6" r="13" fill="#000"/>
<circle cx="618.4" cy="356.3" r="13" fill="#000"/>
<polyline points="529.3,228.2 529.3,238.0 512.7,251.8" fill="none" stroke="#000" stroke-width="15" stroke-linecap="round" stroke-linejoin="round"/>
<polyline points="530.4,260.2 512.7,283.8" fill="none" stroke="#000" stroke-width="15" stroke-linecap="round" stroke-linejoin="round"/>
<polyline points="642.4,228.2 659.2,251.8" fill="none" stroke="#000" stroke-width="15" stroke-linecap="round" stroke-linejoin="round"/>
<polyline points="642.4,283.2 675.4,283.8" fill="none" stroke="#000" stroke-width="15" stroke-linecap="round" stroke-linejoin="round"/>
<polyline points="691.7,267.8 712.6,268.3" fill="none" stroke="#000" stroke-width="15" stroke-linecap="round" stroke-linejoin="round"/>
<polyline points="691.7,299.7 702.0,300.2 712.6,305.0" fill="none" stroke="#000" stroke-width="15" stroke-linecap="round" stroke-linejoin="round"/>
<polyline points="642.4,260.3 650.0,267.8 659.2,267.8" fill="none" stroke="#000" stroke-width="14" stroke-linecap="round" stroke-linejoin="round"/>
<polyline points="610.4,187.9 610.3,204.2" fill="none" stroke="#000" stroke-width="9" stroke-linecap="round" stroke-linejoin="round"/>
<polyline points="610.3,204.2 626.6,203.9" fill="none" stroke="#000" stroke-width="9" stroke-linecap="round" stroke-linejoin="round"/>
<polyline points="545.3,251.8 561.7,251.2" fill="none" stroke="#000" stroke-width="9" stroke-linecap="round" stroke-linejoin="round"/>
<polyline points="561.7,251.2 561.5,267.8" fill="none" stroke="#000" stroke-width="9" stroke-linecap="round" stroke-linejoin="round"/>
<polyline points="608.5,250.3 626.6,267.8" fill="none" stroke="#000" stroke-width="9" stroke-linecap="round" stroke-linejoin="round"/>
<polyline points="691.7,251.8 675.4,267.8 691.7,283.8" fill="none" stroke="#000" stroke-width="9" stroke-linecap="round" stroke-linejoin="round"/>
<polyline points="521.2,336.0 521.3,381.6" fill="none" stroke="#000" stroke-width="16" stroke-linecap="butt" stroke-linejoin="round"/>
<polygon points="528.0,338.0 545.0,338.0 545.0,350.0 528.0,368.0" fill="#000"/>
<polyline points="539.6,356.3 561.3,381.6" fill="none" stroke="#000" stroke-width="16" stroke-linecap="round" stroke-linejoin="round"/>
<polyline points="539.6,340.0 539.6,356.3" fill="none" stroke="#000" stroke-width="20" stroke-linecap="round" stroke-linejoin="round"/>
<polyline points="618.4,338.0 618.4,356.3" fill="none" stroke="#000" stroke-width="24" stroke-linecap="round" stroke-linejoin="round"/>
<polyline points="691.7,267.8 712.6,268.3" fill="none" stroke="#000" stroke-width="28.8" stroke-linecap="round" stroke-linejoin="round"/>
<polyline points="691.7,299.7 712.6,305.0" fill="none" stroke="#000" stroke-width="28.8" stroke-linecap="round" stroke-linejoin="round"/>
<rect x="698" y="268" width="16.8" height="37" fill="#000"/>
<circle cx="700.5" cy="250.5" r="4.6" fill="#c1f26d"/>
<circle cx="675.4" cy="267.8" r="10.2" fill="#000"/>
<circle cx="691.7" cy="283.8" r="10.2" fill="#000"/>
<polyline points="610.4,187.9 610.3,204.2" fill="none" stroke="#bdee6c" stroke-width="3.4" stroke-linecap="round" stroke-linejoin="round"/>
<polyline points="610.3,204.2 626.6,203.9" fill="none" stroke="#bdee6c" stroke-width="3.4" stroke-linecap="round" stroke-linejoin="round"/>
<polyline points="545.3,251.8 561.7,251.2" fill="none" stroke="#bdee6c" stroke-width="3.4" stroke-linecap="round" stroke-linejoin="round"/>
<polyline points="561.7,251.2 561.5,267.8" fill="none" stroke="#bdee6c" stroke-width="3.4" stroke-linecap="round" stroke-linejoin="round"/>
<polyline points="608.5,250.3 626.6,267.8" fill="none" stroke="#bdee6c" stroke-width="3.4" stroke-linecap="round" stroke-linejoin="round"/>
<polyline points="691.7,251.8 675.4,267.8 691.7,283.8" fill="none" stroke="#bdee6c" stroke-width="3.4" stroke-linecap="round" stroke-linejoin="round"/>
<polyline points="324.0,80.0 324.0,279.0 399.5,355.8" fill="none" stroke="#0b7a3c" stroke-width="4.0" stroke-linecap="round" stroke-linejoin="round"/>
<polyline points="399.0,356.0 433.5,356.0" fill="none" stroke="#0a8ffc" stroke-width="4.2" stroke-linecap="round" stroke-linejoin="round"/>
<polyline points="433.5,356.0 449.4,356.0" fill="none" stroke="#0b7a3c" stroke-width="4.0" stroke-linecap="round" stroke-linejoin="round"/>
<polyline points="334.0,80.0 334.0,199.0" fill="none" stroke="#0b7a3c" stroke-width="4.0" stroke-linecap="round" stroke-linejoin="round"/>
<polyline points="334.0,199.0 334.0,242.0" fill="none" stroke="#ff0000" stroke-width="2.2" stroke-linecap="butt" stroke-linejoin="round"/>
<polyline points="334.0,242.0 334.0,250.0 350.3,268.0" fill="none" stroke="#0b7a3c" stroke-width="4.0" stroke-linecap="round" stroke-linejoin="round"/>
<polyline points="344.0,80.0 344.0,180.0 350.0,188.0" fill="none" stroke="#0b7a3c" stroke-width="4.0" stroke-linecap="round" stroke-linejoin="round"/>
<polyline points="354.0,80.0 354.0,141.0 388.7,177.0 388.7,253.0" fill="none" stroke="#0b7a3c" stroke-width="4.0" stroke-linecap="round" stroke-linejoin="round"/>
<polyline points="363.3,80.0 363.3,136.5 405.0,179.0 405.0,287.0 441.8,322.7 449.4,325.0" fill="none" stroke="#0b7a3c" stroke-width="4.0" stroke-linecap="round" stroke-linejoin="round"/>
<polyline points="388.0,80.0 388.0,126.4" fill="none" stroke="#0a8ffc" stroke-width="4.2" stroke-linecap="round" stroke-linejoin="round"/>
<polyline points="388.0,126.4 415.0,154.5 415.0,281.0 438.2,304.9 449.4,304.9" fill="none" stroke="#0b7a3c" stroke-width="4.0" stroke-linecap="round" stroke-linejoin="round"/>
<polyline points="397.2,80.0 397.2,117.5" fill="none" stroke="#0a8ffc" stroke-width="4.2" stroke-linecap="round" stroke-linejoin="round"/>
<polyline points="397.2,117.5 397.2,122.0 425.0,150.0 425.0,217.0 436.2,228.1" fill="none" stroke="#0b7a3c" stroke-width="4.0" stroke-linecap="round" stroke-linejoin="round"/>
<polyline points="435.5,80.0 435.5,111.5" fill="none" stroke="#0b7a3c" stroke-width="4.0" stroke-linecap="round" stroke-linejoin="round"/>
<polyline points="453.0,80.0 453.0,118.8 435.2,136.6 435.2,185.3 451.1,202.0" fill="none" stroke="#0b7a3c" stroke-width="4.0" stroke-linecap="round" stroke-linejoin="round"/>
<polyline points="451.1,177.0 467.7,192.4 467.7,240.0 471.0,244.0 474.9,244.2" fill="none" stroke="#0b7a3c" stroke-width="4.0" stroke-linecap="round" stroke-linejoin="round"/>
<polyline points="474.9,244.2 489.1,244.2 496.5,251.8" fill="none" stroke="#ff0000" stroke-width="1.6" stroke-linecap="butt" stroke-linejoin="round"/>
<polyline points="451.1,202.0 459.0,209.0 459.0,246.4 480.2,267.8" fill="none" stroke="#0b7a3c" stroke-width="4.0" stroke-linecap="round" stroke-linejoin="round"/>
<polyline points="436.2,228.1 451.7,242.4 451.7,254.3 473.3,276.0" fill="none" stroke="#0b7a3c" stroke-width="4.0" stroke-linecap="round" stroke-linejoin="round"/>
<polyline points="473.3,276.0 489.1,276.0 496.5,267.8" fill="none" stroke="#ff0000" stroke-width="1.6" stroke-linecap="butt" stroke-linejoin="round"/>
<polyline points="436.3,253.2 467.0,283.9 480.2,283.8" fill="none" stroke="#0b7a3c" stroke-width="4.0" stroke-linecap="round" stroke-linejoin="round"/>
<polyline points="436.3,279.1 448.7,278.5 463.0,291.5 473.3,291.5" fill="none" stroke="#0b7a3c" stroke-width="4.0" stroke-linecap="round" stroke-linejoin="round"/>
<polyline points="473.3,291.5 489.1,291.5 496.5,283.8" fill="none" stroke="#ff0000" stroke-width="1.6" stroke-linecap="butt" stroke-linejoin="round"/>
<polyline points="449.5,305.0 455.0,300.0 480.2,299.7" fill="none" stroke="#0b7a3c" stroke-width="4.0" stroke-linecap="round" stroke-linejoin="round"/>
<polyline points="449.5,325.0 473.3,307.3" fill="none" stroke="#0b7a3c" stroke-width="4.0" stroke-linecap="round" stroke-linejoin="round"/>
<polyline points="473.3,307.6 489.1,307.6 496.5,299.7" fill="none" stroke="#ff0000" stroke-width="1.6" stroke-linecap="butt" stroke-linejoin="round"/>
<polyline points="449.4,356.0 451.0,346.0 473.5,322.7" fill="none" stroke="#0b7a3c" stroke-width="4.0" stroke-linecap="round" stroke-linejoin="round"/>
<polyline points="473.3,322.8 489.1,322.8 496.5,315.7" fill="none" stroke="#ff0000" stroke-width="1.6" stroke-linecap="butt" stroke-linejoin="round"/>
<polyline points="512.7,315.7 518.0,320.0 520.8,323.5 520.8,340.0" fill="none" stroke="#ff0000" stroke-width="1.6" stroke-linecap="butt" stroke-linejoin="round"/>
<polyline points="520.8,340.0 521.3,381.6" fill="none" stroke="#0b7a3c" stroke-width="4.0" stroke-linecap="round" stroke-linejoin="round"/>
<polyline points="529.3,228.2 529.3,238.0 512.7,251.8" fill="none" stroke="#0a8ffc" stroke-width="5.6" stroke-linecap="round" stroke-linejoin="round"/>
<polyline points="530.4,260.2 512.7,283.8" fill="none" stroke="#0a8ffc" stroke-width="5.6" stroke-linecap="round" stroke-linejoin="round"/>
<polyline points="642.4,228.2 659.2,251.8" fill="none" stroke="#0a8ffc" stroke-width="5.6" stroke-linecap="round" stroke-linejoin="round"/>
<polyline points="642.4,283.2 675.4,283.8" fill="none" stroke="#0a8ffc" stroke-width="5.5" stroke-linecap="round" stroke-linejoin="round"/>
<polyline points="691.7,267.8 712.6,268.3" fill="none" stroke="#0a8ffc" stroke-width="5.5" stroke-linecap="round" stroke-linejoin="round"/>
<polyline points="691.7,299.7 702.0,300.2 712.6,305.0" fill="none" stroke="#0a8ffc" stroke-width="5.5" stroke-linecap="round" stroke-linejoin="round"/>
<polyline points="642.4,260.3 650.0,267.8 659.2,267.8" fill="none" stroke="#0b7a3c" stroke-width="4.0" stroke-linecap="round" stroke-linejoin="round"/>
<rect x="387" y="202" width="3.8" height="22.7" fill="#ff0000"/>
<rect x="403" y="202" width="4.2" height="22.7" fill="#ff0000"/>
<rect x="413.3" y="202" width="4.0" height="22.7" fill="#ff0000"/>
<rect x="384.5" y="201.5" width="36" height="24" fill="none" stroke="#fff" stroke-width="1" stroke-dasharray="2.6 1.5"/>
<path d="M391.3 178.6 L396.4 178.6 Q401.5 180.5 403.4 186 L403.7 196" fill="none" stroke="#f0f0f0" stroke-width="1"/>
<path d="M401.4 194.4 L403.7 199.2 L406 194.4 Z" fill="#fff"/>
<text x="309.4" y="180.8" font-family="Liberation Sans, sans-serif" font-size="10" fill="#f4f4f4" stroke="#3c3c3c" stroke-width="1.9" paint-order="stroke" stroke-linejoin="round" textLength="79.6" lengthAdjust="spacingAndGlyphs">Copper Cut Out</text>
<circle cx="480.2" cy="124.0" r="3.7" fill="#f7b95f"/>
<circle cx="480.2" cy="140.0" r="3.7" fill="#f7b95f"/>
<circle cx="480.2" cy="155.9" r="3.7" fill="#f7b95f"/>
<circle cx="480.2" cy="171.9" r="3.7" fill="#f7b95f"/>
<circle cx="480.2" cy="187.9" r="3.7" fill="#f7b95f"/>
<circle cx="480.2" cy="203.9" r="3.7" fill="#f7b95f"/>
<circle cx="480.2" cy="219.8" r="3.7" fill="#f7b95f"/>
<circle cx="480.2" cy="235.8" r="3.7" fill="#f7b95f"/>
<circle cx="480.2" cy="251.8" r="3.7" fill="#f7b95f"/>
<circle cx="480.2" cy="267.8" r="3.7" fill="#f7b95f"/>
<circle cx="480.2" cy="283.8" r="3.7" fill="#f7b95f"/>
<circle cx="480.2" cy="299.7" r="3.7" fill="#f7b95f"/>
<circle cx="480.2" cy="315.7" r="3.7" fill="#f7b95f"/>
<circle cx="480.2" cy="331.7" r="3.7" fill="#f7b95f"/>
<circle cx="496.5" cy="124.0" r="3.7" fill="#f7b95f"/>
<circle cx="496.5" cy="140.0" r="3.7" fill="#f7b95f"/>
<circle cx="496.5" cy="155.9" r="3.7" fill="#f7b95f"/>
<circle cx="496.5" cy="171.9" r="3.7" fill="#f7b95f"/>
<circle cx="496.5" cy="187.9" r="3.7" fill="#f7b95f"/>
<circle cx="496.5" cy="203.9" r="3.7" fill="#f7b95f"/>
<circle cx="496.5" cy="219.8" r="3.7" fill="#f7b95f"/>
<circle cx="496.5" cy="235.8" r="3.7" fill="#f7b95f"/>
<circle cx="496.5" cy="251.8" r="3.7" fill="#f7b95f"/>
<circle cx="496.5" cy="267.8" r="3.7" fill="#f7b95f"/>
<circle cx="496.5" cy="283.8" r="3.7" fill="#f7b95f"/>
<circle cx="496.5" cy="299.7" r="3.7" fill="#f7b95f"/>
<circle cx="496.5" cy="315.7" r="3.7" fill="#f7b95f"/>
<circle cx="496.5" cy="331.7" r="3.7" fill="#f7b95f"/>
<circle cx="512.7" cy="124.0" r="3.7" fill="#f7b95f"/>
<circle cx="512.7" cy="140.0" r="3.7" fill="#f7b95f"/>
<circle cx="512.7" cy="155.9" r="3.7" fill="#f7b95f"/>
<circle cx="512.7" cy="171.9" r="3.7" fill="#f7b95f"/>
<circle cx="512.7" cy="187.9" r="3.7" fill="#f7b95f"/>
<circle cx="512.7" cy="203.9" r="3.7" fill="#f7b95f"/>
<circle cx="512.7" cy="219.8" r="3.7" fill="#f7b95f"/>
<circle cx="512.7" cy="235.8" r="3.7" fill="#f7b95f"/>
<circle cx="512.7" cy="251.8" r="3.7" fill="#f7b95f"/>
<circle cx="512.7" cy="267.8" r="3.7" fill="#f7b95f"/>
<circle cx="512.7" cy="283.8" r="3.7" fill="#f7b95f"/>
<circle cx="512.7" cy="299.7" r="3.7" fill="#f7b95f"/>
<circle cx="512.7" cy="315.7" r="3.7" fill="#f7b95f"/>
<circle cx="512.7" cy="331.7" r="3.7" fill="#f7b95f"/>
<circle cx="529.0" cy="124.0" r="3.7" fill="#f7b95f"/>
<circle cx="529.0" cy="140.0" r="3.7" fill="#f7b95f"/>
<circle cx="529.0" cy="155.9" r="3.7" fill="#f7b95f"/>
<circle cx="529.0" cy="283.8" r="3.7" fill="#f7b95f"/>
<circle cx="529.0" cy="299.7" r="3.7" fill="#f7b95f"/>
<circle cx="529.0" cy="315.7" r="3.7" fill="#f7b95f"/>
<circle cx="529.0" cy="331.7" r="3.7" fill="#f7b95f"/>
<circle cx="545.3" cy="124.0" r="3.7" fill="#f7b95f"/>
<circle cx="545.3" cy="140.0" r="3.7" fill="#f7b95f"/>
<circle cx="545.3" cy="155.9" r="3.7" fill="#f7b95f"/>
<circle cx="545.3" cy="187.9" r="3.7" fill="#f7b95f"/>
<circle cx="545.3" cy="203.9" r="3.7" fill="#f7b95f"/>
<circle cx="545.3" cy="219.8" r="3.7" fill="#f7b95f"/>
<circle cx="545.3" cy="235.8" r="3.7" fill="#f7b95f"/>
<circle cx="545.3" cy="251.8" r="3.7" fill="#f7b95f"/>
<circle cx="545.3" cy="267.8" r="3.7" fill="#f7b95f"/>
<circle cx="545.3" cy="299.7" r="3.7" fill="#f7b95f"/>
<circle cx="545.3" cy="315.7" r="3.7" fill="#f7b95f"/>
<circle cx="545.3" cy="331.7" r="3.7" fill="#f7b95f"/>
<circle cx="561.5" cy="124.0" r="3.7" fill="#f7b95f"/>
<circle cx="561.5" cy="140.0" r="3.7" fill="#f7b95f"/>
<circle cx="561.5" cy="155.9" r="3.7" fill="#f7b95f"/>
<circle cx="561.5" cy="187.9" r="3.7" fill="#f7b95f"/>
<circle cx="561.5" cy="267.8" r="3.7" fill="#f7b95f"/>
<circle cx="561.5" cy="299.7" r="3.7" fill="#f7b95f"/>
<circle cx="561.5" cy="315.7" r="3.7" fill="#f7b95f"/>
<circle cx="561.5" cy="331.7" r="3.7" fill="#f7b95f"/>
<circle cx="577.8" cy="124.0" r="3.7" fill="#f7b95f"/>
<circle cx="577.8" cy="140.0" r="3.7" fill="#f7b95f"/>
<circle cx="577.8" cy="155.9" r="3.7" fill="#f7b95f"/>
<circle cx="577.8" cy="187.9" r="3.7" fill="#f7b95f"/>
<circle cx="577.8" cy="267.8" r="3.7" fill="#f7b95f"/>
<circle cx="577.8" cy="299.7" r="3.7" fill="#f7b95f"/>
<circle cx="577.8" cy="315.7" r="3.7" fill="#f7b95f"/>
<circle cx="577.8" cy="331.7" r="3.7" fill="#f7b95f"/>
<circle cx="594.1" cy="124.0" r="3.7" fill="#f7b95f"/>
<circle cx="594.1" cy="140.0" r="3.7" fill="#f7b95f"/>
<circle cx="594.1" cy="155.9" r="3.7" fill="#f7b95f"/>
<circle cx="594.1" cy="187.9" r="3.7" fill="#f7b95f"/>
<circle cx="594.1" cy="267.8" r="3.7" fill="#f7b95f"/>
<circle cx="594.1" cy="299.7" r="3.7" fill="#f7b95f"/>
<circle cx="594.1" cy="315.7" r="3.7" fill="#f7b95f"/>
<circle cx="594.1" cy="331.7" r="3.7" fill="#f7b95f"/>
<circle cx="610.4" cy="124.0" r="3.7" fill="#f7b95f"/>
<circle cx="610.4" cy="140.0" r="3.7" fill="#f7b95f"/>
<circle cx="610.4" cy="155.9" r="3.7" fill="#f7b95f"/>
<circle cx="610.4" cy="187.9" r="3.7" fill="#f7b95f"/>
<circle cx="610.4" cy="267.8" r="3.7" fill="#f7b95f"/>
<circle cx="610.4" cy="299.7" r="3.7" fill="#f7b95f"/>
<circle cx="610.4" cy="315.7" r="3.7" fill="#f7b95f"/>
<circle cx="610.4" cy="331.7" r="3.7" fill="#f7b95f"/>
<circle cx="626.6" cy="124.0" r="3.7" fill="#f7b95f"/>
<circle cx="626.6" cy="140.0" r="3.7" fill="#f7b95f"/>
<circle cx="626.6" cy="155.9" r="3.7" fill="#f7b95f"/>
<circle cx="626.6" cy="187.9" r="3.7" fill="#f7b95f"/>
<circle cx="626.6" cy="203.9" r="3.7" fill="#f7b95f"/>
<circle cx="626.6" cy="219.8" r="3.7" fill="#f7b95f"/>
<circle cx="626.6" cy="235.8" r="3.7" fill="#f7b95f"/>
<circle cx="626.6" cy="251.8" r="3.7" fill="#f7b95f"/>
<circle cx="626.6" cy="267.8" r="3.7" fill="#f7b95f"/>
<circle cx="626.6" cy="299.7" r="3.7" fill="#f7b95f"/>
<circle cx="626.6" cy="315.7" r="3.7" fill="#f7b95f"/>
<circle cx="626.6" cy="331.7" r="3.7" fill="#f7b95f"/>
<circle cx="642.9" cy="124.0" r="3.7" fill="#f7b95f"/>
<circle cx="642.9" cy="140.0" r="3.7" fill="#f7b95f"/>
<circle cx="642.9" cy="155.9" r="3.7" fill="#f7b95f"/>
<circle cx="642.9" cy="299.7" r="3.7" fill="#f7b95f"/>
<circle cx="642.9" cy="315.7" r="3.7" fill="#f7b95f"/>
<circle cx="642.9" cy="331.7" r="3.7" fill="#f7b95f"/>
<circle cx="659.2" cy="124.0" r="3.7" fill="#f7b95f"/>
<circle cx="659.2" cy="140.0" r="3.7" fill="#f7b95f"/>
<circle cx="659.2" cy="155.9" r="3.7" fill="#f7b95f"/>
<circle cx="659.2" cy="171.9" r="3.7" fill="#f7b95f"/>
<circle cx="659.2" cy="187.9" r="3.7" fill="#f7b95f"/>
<circle cx="659.2" cy="203.9" r="3.7" fill="#f7b95f"/>
<circle cx="659.2" cy="219.8" r="3.7" fill="#f7b95f"/>
<circle cx="659.2" cy="235.8" r="3.7" fill="#f7b95f"/>
<circle cx="659.2" cy="251.8" r="3.7" fill="#f7b95f"/>
<circle cx="659.2" cy="267.8" r="3.7" fill="#f7b95f"/>
<circle cx="659.2" cy="283.8" r="3.7" fill="#f7b95f"/>
<circle cx="659.2" cy="299.7" r="3.7" fill="#f7b95f"/>
<circle cx="659.2" cy="315.7" r="3.7" fill="#f7b95f"/>
<circle cx="659.2" cy="331.7" r="3.7" fill="#f7b95f"/>
<circle cx="675.4" cy="124.0" r="3.7" fill="#f7b95f"/>
<circle cx="675.4" cy="140.0" r="3.7" fill="#f7b95f"/>
<circle cx="675.4" cy="155.9" r="3.7" fill="#f7b95f"/>
<circle cx="675.4" cy="171.9" r="3.7" fill="#f7b95f"/>
<circle cx="675.4" cy="187.9" r="3.7" fill="#f7b95f"/>
<circle cx="675.4" cy="203.9" r="3.7" fill="#f7b95f"/>
<circle cx="675.4" cy="219.8" r="3.7" fill="#f7b95f"/>
<circle cx="675.4" cy="235.8" r="3.7" fill="#f7b95f"/>
<circle cx="675.4" cy="251.8" r="3.7" fill="#f7b95f"/>
<circle cx="675.4" cy="267.8" r="3.7" fill="#f7b95f"/>
<circle cx="675.4" cy="283.8" r="3.7" fill="#f7b95f"/>
<circle cx="675.4" cy="299.7" r="3.7" fill="#f7b95f"/>
<circle cx="675.4" cy="315.7" r="3.7" fill="#f7b95f"/>
<circle cx="675.4" cy="331.7" r="3.7" fill="#f7b95f"/>
<circle cx="691.7" cy="124.0" r="3.7" fill="#f7b95f"/>
<circle cx="691.7" cy="140.0" r="3.7" fill="#f7b95f"/>
<circle cx="691.7" cy="155.9" r="3.7" fill="#f7b95f"/>
<circle cx="691.7" cy="171.9" r="3.7" fill="#f7b95f"/>
<circle cx="691.7" cy="187.9" r="3.7" fill="#f7b95f"/>
<circle cx="691.7" cy="203.9" r="3.7" fill="#f7b95f"/>
<circle cx="691.7" cy="219.8" r="3.7" fill="#f7b95f"/>
<circle cx="691.7" cy="235.8" r="3.7" fill="#f7b95f"/>
<circle cx="691.7" cy="251.8" r="3.7" fill="#f7b95f"/>
<circle cx="691.7" cy="267.8" r="3.7" fill="#f7b95f"/>
<circle cx="691.7" cy="283.8" r="3.7" fill="#f7b95f"/>
<circle cx="691.7" cy="299.7" r="3.7" fill="#f7b95f"/>
<circle cx="691.7" cy="315.7" r="3.7" fill="#f7b95f"/>
<circle cx="691.7" cy="331.7" r="3.7" fill="#f7b95f"/>
<circle cx="294.4" cy="124.2" r="7.8" fill="#f7b95f"/>
<circle cx="294.4" cy="124.2" r="3.7" fill="#3e4044"/>
<circle cx="350.0" cy="188.0" r="7.8" fill="#f7b95f"/>
<circle cx="350.0" cy="188.0" r="3.7" fill="#3e4044"/>
<circle cx="435.5" cy="111.5" r="7.8" fill="#f7b95f"/>
<circle cx="435.5" cy="111.5" r="3.7" fill="#3e4044"/>
<circle cx="451.1" cy="177.0" r="7.8" fill="#f7b95f"/>
<circle cx="451.1" cy="177.0" r="3.7" fill="#3e4044"/>
<circle cx="451.1" cy="202.0" r="7.8" fill="#f7b95f"/>
<circle cx="451.1" cy="202.0" r="3.7" fill="#3e4044"/>
<circle cx="436.2" cy="228.1" r="7.8" fill="#f7b95f"/>
<circle cx="436.2" cy="228.1" r="3.7" fill="#3e4044"/>
<circle cx="436.3" cy="253.2" r="7.8" fill="#f7b95f"/>
<circle cx="436.3" cy="253.2" r="3.7" fill="#3e4044"/>
<circle cx="436.3" cy="279.1" r="7.8" fill="#f7b95f"/>
<circle cx="436.3" cy="279.1" r="3.7" fill="#3e4044"/>
<circle cx="449.5" cy="305.0" r="7.8" fill="#f7b95f"/>
<circle cx="449.5" cy="305.0" r="3.7" fill="#3e4044"/>
<circle cx="449.5" cy="325.0" r="7.8" fill="#f7b95f"/>
<circle cx="449.5" cy="325.0" r="3.7" fill="#3e4044"/>
<circle cx="449.4" cy="356.0" r="7.8" fill="#f7b95f"/>
<circle cx="449.4" cy="356.0" r="3.7" fill="#3e4044"/>
<circle cx="389.5" cy="253.0" r="7.8" fill="#f7b95f"/>
<circle cx="389.5" cy="253.0" r="3.7" fill="#3e4044"/>
<circle cx="350.3" cy="268.0" r="7.8" fill="#f7b95f"/>
<circle cx="350.3" cy="268.0" r="3.7" fill="#3e4044"/>
<circle cx="529.3" cy="228.2" r="7.8" fill="#f7b95f"/>
<circle cx="529.3" cy="228.2" r="3.7" fill="#3e4044"/>
<circle cx="530.4" cy="260.2" r="7.8" fill="#f7b95f"/>
<circle cx="530.4" cy="260.2" r="3.7" fill="#3e4044"/>
<circle cx="642.4" cy="228.2" r="7.8" fill="#f7b95f"/>
<circle cx="642.4" cy="228.2" r="3.7" fill="#3e4044"/>
<circle cx="642.4" cy="260.3" r="7.8" fill="#f7b95f"/>
<circle cx="642.4" cy="260.3" r="3.7" fill="#3e4044"/>
<circle cx="642.4" cy="282.5" r="7.8" fill="#f7b95f"/>
<circle cx="642.4" cy="282.5" r="3.7" fill="#3e4044"/>
<circle cx="610.3" cy="204.2" r="7.8" fill="#f7b95f"/>
<circle cx="610.3" cy="204.2" r="3.7" fill="#3e4044"/>
<circle cx="561.7" cy="251.2" r="7.8" fill="#f7b95f"/>
<circle cx="561.7" cy="251.2" r="3.7" fill="#3e4044"/>
<circle cx="608.5" cy="250.3" r="7.8" fill="#f7b95f"/>
<circle cx="608.5" cy="250.3" r="3.7" fill="#3e4044"/>
<circle cx="712.6" cy="268.3" r="7.8" fill="#f7b95f"/>
<circle cx="712.6" cy="268.3" r="3.7" fill="#3e4044"/>
<circle cx="712.6" cy="305.0" r="7.8" fill="#f7b95f"/>
<circle cx="712.6" cy="305.0" r="3.7" fill="#3e4044"/>
<circle cx="539.6" cy="356.3" r="7.8" fill="#f7b95f"/>
<circle cx="539.6" cy="356.3" r="3.7" fill="#3e4044"/>
<circle cx="521.3" cy="381.6" r="7.8" fill="#f7b95f"/>
<circle cx="521.3" cy="381.6" r="3.7" fill="#3e4044"/>
<circle cx="561.3" cy="381.6" r="7.8" fill="#f7b95f"/>
<circle cx="561.3" cy="381.6" r="3.7" fill="#3e4044"/>
<circle cx="618.4" cy="356.3" r="7.8" fill="#f7b95f"/>
<circle cx="618.4" cy="356.3" r="3.7" fill="#3e4044"/>
<circle cx="581.3" cy="215.2" r="7.8" fill="#f7b95f"/>
<circle cx="581.3" cy="215.2" r="3.7" fill="#3e4044"/>
<circle cx="603.5" cy="228.2" r="7.8" fill="#f7b95f"/>
<circle cx="603.5" cy="228.2" r="3.7" fill="#3e4044"/>
<circle cx="581.3" cy="236.1" r="7.8" fill="#f7b95f"/>
<circle cx="581.3" cy="236.1" r="3.7" fill="#3e4044"/>
<circle cx="682.3" cy="356.3" r="7.8" fill="#f7b95f"/>
<circle cx="682.3" cy="356.3" r="3.7" fill="#3e4044"/>
<circle cx="310.4" cy="392.0" r="7.8" fill="#f7b95f"/>
<circle cx="310.4" cy="392.0" r="3.7" fill="#3e4044"/>
<defs><linearGradient id="g13" x1="0" y1="0" x2="0" y2="1"><stop offset="0" stop-color="#8a4420"/><stop offset="1" stop-color="#d02010"/></linearGradient></defs>
<rect x="853.2" y="101.90" width="20.6" height="8.92" fill="#0a8ffc" stroke="#000" stroke-width="1"/>
<rect x="853.2" y="110.82" width="20.6" height="8.92" fill="#0a8abb" stroke="#000" stroke-width="1"/>
<rect x="853.2" y="119.74" width="20.6" height="8.92" fill="#0a8ca0" stroke="#000" stroke-width="1"/>
<rect x="853.2" y="128.66" width="20.6" height="8.92" fill="#0a8b8c" stroke="#000" stroke-width="1"/>
<rect x="853.2" y="137.58" width="20.6" height="8.92" fill="#0a8878" stroke="#000" stroke-width="1"/>
<rect x="853.2" y="146.50" width="20.6" height="8.92" fill="#0a8464" stroke="#000" stroke-width="1"/>
<rect x="853.2" y="155.42" width="20.6" height="8.92" fill="#0a8050" stroke="#000" stroke-width="1"/>
<rect x="853.2" y="164.34" width="20.6" height="8.92" fill="#0a7c3c" stroke="#000" stroke-width="1"/>
<rect x="853.2" y="173.26" width="20.6" height="8.92" fill="#147036" stroke="#000" stroke-width="1"/>
<rect x="853.2" y="182.18" width="20.6" height="8.92" fill="#2a6432" stroke="#000" stroke-width="1"/>
<rect x="853.2" y="191.10" width="20.6" height="8.92" fill="#40582d" stroke="#000" stroke-width="1"/>
<rect x="853.2" y="200.02" width="20.6" height="8.92" fill="#5c5028" stroke="#000" stroke-width="1"/>
<rect x="853.2" y="208.94" width="20.6" height="8.92" fill="#784822" stroke="#000" stroke-width="1"/>
<rect x="853.2" y="217.86" width="20.6" height="8.92" fill="url(#g13)" stroke="#000" stroke-width="1"/>
<rect x="853.2" y="226.78" width="20.6" height="8.92" fill="#ff0000" stroke="#000" stroke-width="1"/>
<text x="847.2" y="108.8" text-anchor="end" font-family="Liberation Sans, sans-serif" font-size="11.5" fill="#111" stroke="#111" stroke-width="0.45">0</text>
<text x="849.4" y="174.5" text-anchor="end" font-family="Liberation Sans, sans-serif" font-size="11.5" fill="#111" stroke="#111" stroke-width="0.45">50</text>
<text x="849.4" y="234.3" text-anchor="end" font-family="Liberation Sans, sans-serif" font-size="11.5" fill="#111" stroke="#111" stroke-width="0.45">90</text>
<defs><pattern id="ho" width="2.2" height="2.2" patternUnits="userSpaceOnUse" patternTransform="rotate(-45)"><rect width="2.2" height="2.2" fill="#fdf3e4"/><rect width="2.2" height="0.9" fill="#f3b560"/></pattern><pattern id="hg" width="2.2" height="2.2" patternUnits="userSpaceOnUse" patternTransform="rotate(45)"><rect width="2.2" height="2.2" fill="#d8efe4"/><rect width="2.2" height="0.95" fill="#1a8a5a"/></pattern></defs>
<rect x="761.5" y="244.8" width="112.8" height="155.2" fill="#fff"/>
<rect x="801.4" y="256.3" width="33.1" height="7.0" fill="url(#ho)" stroke="#000" stroke-width="0.9"/>
<rect x="777.4" y="263.3" width="81.0" height="7.2" fill="url(#hg)" stroke="#000" stroke-width="0.9"/>
<rect x="777.4" y="270.5" width="81.0" height="7.0" fill="url(#ho)" stroke="#000" stroke-width="0.9"/>
<rect x="777.4" y="295.5" width="81.0" height="7.2" fill="url(#ho)" stroke="#000" stroke-width="0.9"/>
<rect x="777.4" y="302.7" width="81.0" height="13.5" fill="url(#hg)" stroke="#000" stroke-width="0.9"/>
<rect x="801.4" y="306.6" width="33.1" height="5.7" fill="url(#ho)" stroke="#000" stroke-width="0.9"/>
<rect x="777.4" y="316.2" width="81.0" height="7.0" fill="url(#ho)" stroke="#000" stroke-width="0.9"/>
<rect x="777.4" y="341.3" width="81.0" height="7.1" fill="url(#ho)" stroke="#000" stroke-width="0.9"/>
<rect x="777.4" y="348.4" width="81.0" height="26.0" fill="url(#hg)" stroke="#000" stroke-width="0.9"/>
<rect x="801.4" y="352.6" width="33.1" height="6.7" fill="url(#ho)" stroke="#000" stroke-width="0.9"/>
<rect x="801.4" y="363.5" width="33.1" height="6.7" fill="url(#ho)" stroke="#000" stroke-width="0.9"/>
<rect x="777.4" y="374.4" width="81.0" height="6.1" fill="url(#ho)" stroke="#000" stroke-width="0.9"/>
<text x="817" y="287.3" text-anchor="middle" font-family="Liberation Sans, sans-serif" font-size="10.4" fill="#222" textLength="48" lengthAdjust="spacingAndGlyphs">Microstrip</text>
<text x="817" y="334.3" text-anchor="middle" font-family="Liberation Sans, sans-serif" font-size="10.4" fill="#222" textLength="40.5" lengthAdjust="spacingAndGlyphs">Stripline</text>
<text x="817.3" y="391.3" text-anchor="middle" font-family="Liberation Sans, sans-serif" font-size="10.4" fill="#222" textLength="65.8" lengthAdjust="spacingAndGlyphs">Dual Stripline</text>
</svg>
<div class="a" style="left:290px;top:416px;width:596px;height:1px;background:#9a9a9a"></div>
<div class="a" style="left:290px;top:417px;width:596px;height:1px;background:#fff"></div>
<div class="a" style="left:290px;top:416px;width:1px;height:224px;background:#a8a8a8"></div>
<div class="a" style="left:291px;top:417px;width:1px;height:223px;background:#fff"></div>
<div class="a" style="left:299px;top:430px;width:580px;height:202px;background:#fff;box-sizing:border-box;border-top:2px solid #727272;border-left:2px solid #727272;border-right:1px solid #e4e4e4;border-bottom:1px solid #e4e4e4"></div>
<div class="a" style="left:301px;top:432px;width:576px;height:16px;background:#f0f0f0;border-top:1px solid #fff;border-left:1px solid #fff;border-bottom:1px solid #8a8a8a;border-right:1px solid #6a6a6a;box-sizing:content-box"></div>
<div class="sep" style="left:330px"></div>
<div class="gl" style="left:331px;top:450px;width:1px;height:181px"></div>
<div class="sep" style="left:420px"></div>
<div class="gl" style="left:421px;top:450px;width:1px;height:181px"></div>
<div class="sep" style="left:570px"></div>
<div class="gl" style="left:571px;top:450px;width:1px;height:181px"></div>
<div class="sep" style="left:684px"></div>
<div class="gl" style="left:685px;top:450px;width:1px;height:181px"></div>
<div class="gl" style="left:301px;top:466px;width:577px;height:1px"></div>
<div class="gl" style="left:301px;top:481px;width:577px;height:1px"></div>
<div class="gl" style="left:301px;top:496px;width:577px;height:1px"></div>
<div class="gl" style="left:301px;top:511px;width:577px;height:1px"></div>
<div class="gl" style="left:301px;top:526px;width:577px;height:1px"></div>
<div class="gl" style="left:301px;top:541px;width:577px;height:1px"></div>
<div class="gl" style="left:301px;top:556px;width:577px;height:1px"></div>
<div class="gl" style="left:301px;top:571px;width:577px;height:1px"></div>
<div class="gl" style="left:301px;top:586px;width:577px;height:1px"></div>
<div class="gl" style="left:301px;top:601px;width:577px;height:1px"></div>
<div class="gl" style="left:301px;top:616px;width:577px;height:1px"></div>
<div class="hd" style="left:363.8px;text-align:left;letter-spacing:0.719px">Item</div>
<div class="hd" style="left:466.5px;text-align:left;letter-spacing:0.268px">Net Group</div>
<div class="hd" style="left:578.0px;text-align:left;letter-spacing:0.282px">Target Impedance</div>
<div class="hd" style="left:760.0px;text-align:left;letter-spacing:0.190px">Options</div>
<div class="cb4" style="left:309px;top:452.3px"></div>
<svg class="a" style="left:311.2px;top:454.2px" width="9" height="9" viewBox="0 0 9 9"><path d="M1.2 4.2 L3.5 6.6 L7.8 1.6" fill="none" stroke="#000" stroke-width="1.9"/></svg>
<div class="cb4" style="left:309px;top:467.4px"></div>
<div class="t" style="left:356.4px;top:453px;letter-spacing:0.322px;">Item01</div>
<div class="t" style="left:356.4px;top:468px;letter-spacing:0.322px;">Item02</div>
</body></html>
